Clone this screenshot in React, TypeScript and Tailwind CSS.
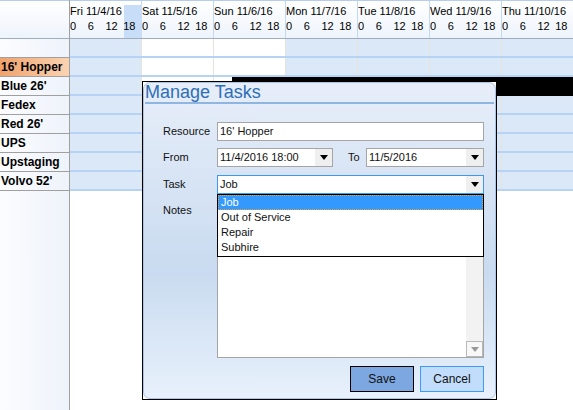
import React from 'react';

const days = [
  'Fri 11/4/16',
  'Sat 11/5/16',
  'Sun 11/6/16',
  'Mon 11/7/16',
  'Tue 11/8/16',
  'Wed 11/9/16',
  'Thu 11/10/16',
];
const hours = ['0', '6', '12', '18'];
const resources = ['', "16' Hopper", "Blue 26'", 'Fedex', "Red 26'", 'UPS', 'Upstaging', "Volvo 52'"];
const taskOptions = ['Job', 'Out of Service', 'Repair', 'Subhire'];

function Caret({ color = '#000' }: { color?: string }) {
  return (
    <svg width="8" height="5" viewBox="0 0 8 5">
      <path d="M0 0h8L4 5z" fill={color} />
    </svg>
  );
}

function DropButton() {
  return (
    <div className="flex h-full w-[17px] items-center justify-center bg-[#efefef]">
      <Caret />
    </div>
  );
}

function Header() {
  return (
    <div className="flex h-[39px] border-t border-b border-t-[#b4cdec] border-b-[#a2adbb] bg-gradient-to-b from-white to-[#eef4fc]">
      {days.map((day, i) => (
        <div key={day} className="relative w-[72px] shrink-0 border-r border-[#c2d8f3]">
          {i === 0 && <div className="absolute left-[54px] top-[4px] bottom-0 w-[18px] bg-[#c8ddf7]" />}
          <div className="relative h-[18px] pt-[4px] leading-[13px] whitespace-nowrap">{day}</div>
          <div className="relative flex h-[18px] pt-[1px] leading-[13px]">
            {hours.map((h) => (
              <span key={h} className="w-[18px]">
                {h}
              </span>
            ))}
          </div>
        </div>
      ))}
    </div>
  );
}

function GridRow({ index }: { index: number }) {
  return (
    <div className="relative flex h-[19px] border-b-2 border-[#b6d3f5]">
      {days.map((day, i) => (
        <div
          key={day}
          className={
            i === 1 || i === 2
              ? 'w-[72px] shrink-0 border-r border-[#e6e3dc] bg-white'
              : 'w-[72px] shrink-0 border-r border-[#e6e3dc] bg-[#dbe8f8]'
          }
        />
      ))}
      {index === 2 && <div className="absolute left-[162px] top-0 h-[19px] w-[400px] bg-black" />}
    </div>
  );
}

function Field({ label, children }: { label: string; children: React.ReactNode }) {
  return (
    <div className="flex h-[19px] items-center">
      <span className="w-[54px] shrink-0">{label}</span>
      {children}
    </div>
  );
}

function ManageTasks() {
  return (
    <div className="absolute left-[142px] top-[81px] h-[319px] w-[355px] border border-black bg-white">
      <div className="flex h-full flex-col rounded-[7px] border border-[#a9c4e6] bg-[linear-gradient(to_bottom,#e7eef9,#c9dbf0_60%,#e8f1fc)] text-[#111]">
        <div className="h-[19px] pl-[1px] text-[18px] leading-[19px] text-[#2d6fb6]">Manage Tasks</div>
        <div className="mx-[1px] h-[2px] bg-[#8fb5e1]" />
        <div className="flex flex-col pl-[19px] pr-[11px] pt-[18px]">
          <Field label="Resource">
            <div className="flex h-full flex-1 items-center border border-[#a5a5a5] bg-white pl-[2px]">16' Hopper</div>
          </Field>
          <div className="mt-[7px]">
            <Field label="From">
              <div className="flex h-full w-[116px] items-center border border-[#a5a5a5] bg-white pl-[2px]">
                <span className="flex-1">11/4/2016 18:00</span>
                <DropButton />
              </div>
              <span className="w-[15px] shrink-0" />
              <span className="w-[18px] shrink-0">To</span>
              <div className="flex h-full flex-1 items-center border border-[#a5a5a5] bg-white pl-[2px]">
                <span className="flex-1">11/5/2016</span>
                <DropButton />
              </div>
            </Field>
          </div>
          <div className="mt-[8px]">
            <Field label="Task">
              <div className="relative flex h-full flex-1 items-center border border-[#3d98f5] bg-white pl-[2px]">
                <span className="flex-1">Job</span>
                <DropButton />
                <div className="absolute left-[-1px] right-[-1px] top-[18px] z-10 flex h-[63px] flex-col border border-black bg-white">
                  {taskOptions.map((opt, i) => (
                    <div
                      key={opt}
                      className={
                        i === 0
                          ? 'h-[15px] border border-dotted border-[#e0a040] bg-[#3399ff] pl-[2px] leading-[13px] text-white'
                          : 'h-[15px] pl-[3px] leading-[15px]'
                      }
                    >
                      {opt}
                    </div>
                  ))}
                </div>
              </div>
            </Field>
          </div>
          <div className="mt-[7px] flex h-[157px]">
            <span className="w-[54px] shrink-0 pt-[1px]">Notes</span>
            <div className="flex flex-1 border border-[#a5a5a5] bg-white">
              <div className="flex-1" />
              <div className="flex w-[17px] flex-col justify-end bg-[#f2f2f2]">
                <div className="flex h-[16px] items-center justify-center border border-[#b8b8b8] bg-[#f8f8f8]">
                  <Caret color="#9a9a9a" />
                </div>
              </div>
            </div>
          </div>
          <div className="mt-[8px] flex justify-end gap-[6px]">
            <button type="button" className="h-[26px] w-[64px] border border-black bg-[#7ca7e0] text-[12px]">
              Save
            </button>
            <button type="button" className="h-[26px] w-[64px] border border-[#3d9bf7] bg-[#c2ddfb] text-[12px]">
              Cancel
            </button>
          </div>
        </div>
      </div>
    </div>
  );
}

export default function App() {
  return (
    <div className="relative h-[410px] w-[573px] overflow-hidden bg-white font-['Liberation_Sans',sans-serif] text-[11px] text-black">
      <div className="flex h-full">
        <div className="flex w-[70px] shrink-0 flex-col border-r border-[#a0a0a0] bg-gradient-to-r from-[#fbfcfe] to-[#eef3fb]">
          <div className="h-[39px] border-t border-b border-t-[#b4cdec] border-b-[#a2adbb] bg-gradient-to-b from-white to-[#eef4fc]" />
          {resources.map((name, i) => (
            <div
              key={name || 'blank'}
              className={
                i === 1
                  ? 'h-[19px] border-b border-[#a0a0a0] bg-gradient-to-r from-[#efa26c] to-[#fbd3b2] pl-[1px] text-[12px] font-bold leading-[18px]'
                  : 'h-[19px] border-b border-[#a0a0a0] pl-[1px] text-[12px] font-bold leading-[18px]'
              }
            >
              {name}
            </div>
          ))}
        </div>
        <div className="flex flex-1 flex-col overflow-hidden">
          <Header />
          {resources.map((name, i) => (
            <GridRow key={name || 'blank'} index={i} />
          ))}
        </div>
      </div>
      <ManageTasks />
    </div>
  );
}
